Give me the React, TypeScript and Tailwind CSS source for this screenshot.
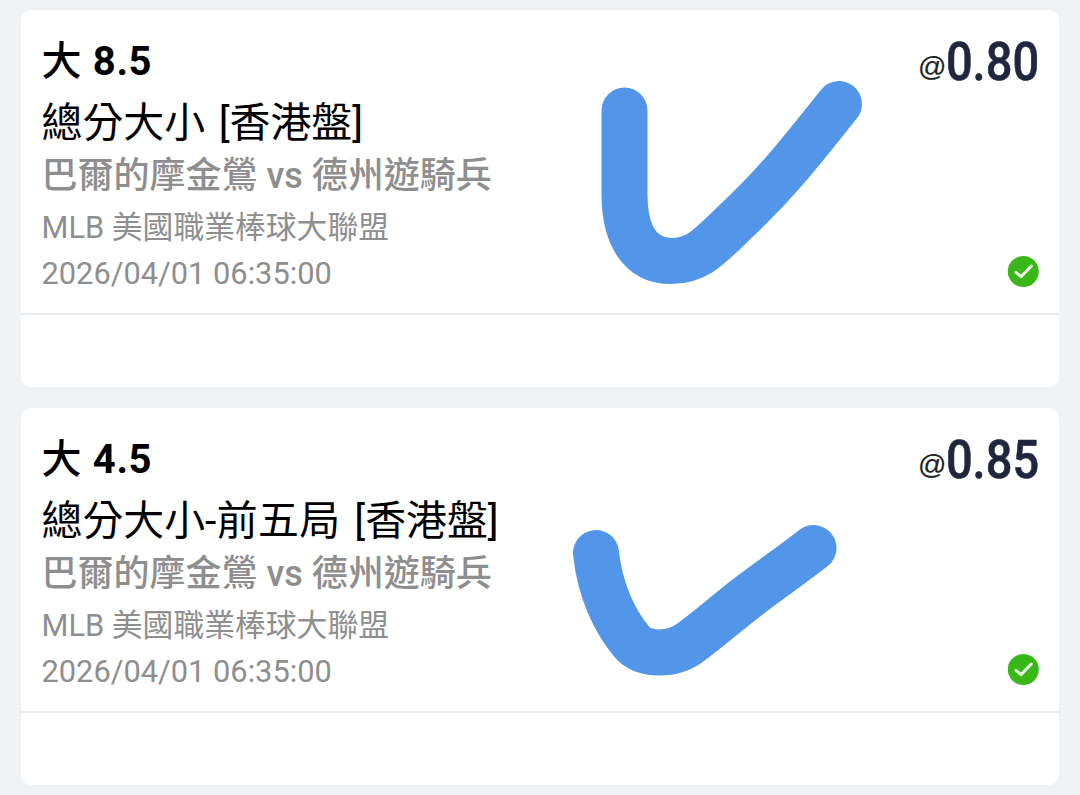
import type {ReactNode} from "react";

type Bet = {
    id: number;
    line: string;
    market: string;
    period?: string;
    home: string;
    away: string;
    league: string;
    time: string;
    odds: string;
    mark: ReactNode;
};

const bets: Bet[] = [
    {
        id: 1,
        line: "8.5",
        market: "總分大小",
        home: "巴爾的摩金鶯",
        away: "德州遊騎兵",
        league: "MLB 美國職業棒球大聯盟",
        time: "2026/04/01 06:35:00",
        odds: "0.80",
        mark: <path d="M603.5 100.5 V184 C603.5 225 619 251 650 251 C676 251 688 237 714 212 C756 173 782 139 818 94" />,
    },
    {
        id: 2,
        line: "4.5",
        market: "總分大小",
        period: "-前五局",
        home: "巴爾的摩金鶯",
        away: "德州遊騎兵",
        league: "MLB 美國職業棒球大聯盟",
        time: "2026/04/01 06:35:00",
        odds: "0.85",
        mark: <path d="M575 145 C579 183 594 214 611 234 C622 248 652 248 670 234 C689 220 706 205 724 191 C750 171 771 157 792.5 140" />,
    },
];

function WonIcon() {
    return (
        <svg className="h-8 w-8" viewBox="0 0 32 32" fill="none">
            <circle cx="16.3" cy="15.5" r="15.5" fill="#39b618" />
            <path d="M9 16.3 L14 20.6 L24.3 10" stroke="#e9fbe2" strokeWidth="3" strokeLinecap="round" strokeLinejoin="round" />
        </svg>
    );
}

function BetCard({bet}: {bet: Bet}) {
    return (
        <section className="relative h-[377px] rounded-[10px] bg-white">
            <div className="flex h-[305px] justify-between border-b-2 border-[#e9ebed] pr-[20px] pl-[20.5px]">
                <div className="whitespace-nowrap">
                    <h2 className="mt-[22px] h-[61px] text-[40px] leading-[60px] font-bold text-black">
                        <span className="font-medium">大</span>
                        <span className="ml-[0.8px] tracking-[0.6px]"> {bet.line}</span>
                    </h2>
                    <p className="h-[58px] text-[40.9px] leading-[60px] text-black">
                        {bet.market}
                        {bet.period && <span className="tracking-[0.4px]">{bet.period}</span>}
                        <span className="ml-[3.5px]"> [香港盤]</span>
                    </p>
                    <p className="h-[52px] text-[36px] leading-[50px] font-medium text-[#8e8e8e]">
                        {bet.home} vs {bet.away}
                    </p>
                    <p className="h-[48px] text-[30.8px] leading-[50px] text-[#8e8e8e]">{bet.league}</p>
                    <p className="h-[46px] text-[30.8px] leading-[46px] text-[#8e8e8e]">{bet.time}</p>
                </div>
                <div className="flex flex-col items-end justify-between pt-[21px] pb-[25px]">
                    <div className="flex h-[62px] items-baseline leading-[62px] text-[#20263e]">
                        <span className="mr-[-14.5px] -translate-y-[4px] font-['Liberation_Sans',sans-serif] text-[28px] text-[#222] [-webkit-text-stroke:0.2px]">
                            @
                        </span>
                        <span className="origin-right scale-x-[0.87] text-[54px] font-medium [-webkit-text-stroke:0.6px]">
                            {bet.odds}
                        </span>
                    </div>
                    <WonIcon />
                </div>
            </div>
            {/* hand-drawn tick over the card */}
            <svg
                className="pointer-events-none absolute top-0 left-0 h-[377px] w-[1038px]"
                viewBox="0 0 1038 377"
                fill="none"
                stroke="#5396e9"
                strokeWidth="46"
                strokeLinecap="round"
                strokeLinejoin="round"
            >
                {bet.mark}
            </svg>
        </section>
    );
}

export default function App() {
    return (
        <main className="flex h-[795px] flex-col gap-[21px] overflow-hidden bg-[#eef2f5] px-[21px] pt-[10px] font-['Roboto','Noto_Sans_CJK_TC',sans-serif]">
            {bets.map((bet) => (
                <BetCard key={bet.id} bet={bet} />
            ))}
        </main>
    );
}
